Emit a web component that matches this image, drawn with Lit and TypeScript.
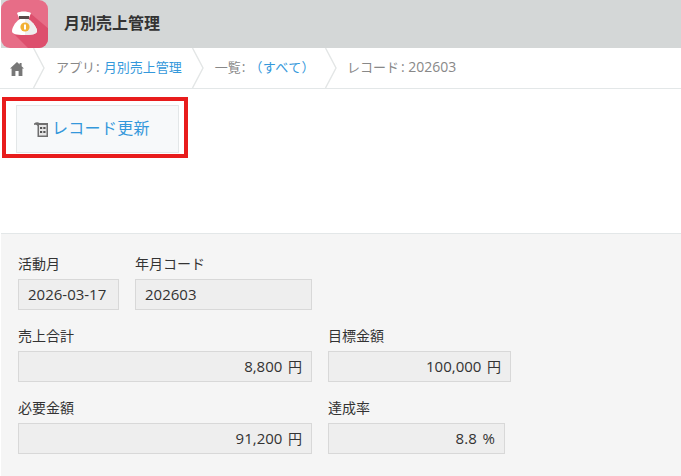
import { LitElement, html, css } from "lit";
import { customElement } from "lit/decorators.js";

const chevron = html`<svg class="chev" width="14" height="40" viewBox="0 0 14 40"><path d="M0.5 0 L11 20 L0.5 40" fill="none" stroke="#e3e6e6" stroke-width="1.4"/></svg>`;

@customElement("app-root")
export class AppRoot extends LitElement {
  static styles = css`
    :host { display: block; width: 681px; height: 476px; overflow: hidden; background: #fff; font-family: "Noto Sans CJK JP", sans-serif; color: #333; }
    .head { height: 48px; margin-left: 1px; background: #d4d7d7; display: flex; align-items: center; gap: 16px; }
    .logo { width: 47px; height: 48px; display: block; }
    .title { font-size: 16px; line-height: 20px; padding-bottom: 5px; font-weight: 700; color: #333; }
    .crumbs { height: 40px; border-bottom: 1px solid #e3e7e8; display: flex; align-items: center; font-size: 13px; line-height: 18px; color: #888; }
    .home { width: 34px; display: flex; justify-content: center; padding-top: 1px; }
    .chev { display: block; flex: none; margin-left: -1px; }
    .crumb { padding: 0 11px 3px 9px; white-space: nowrap; }
    .crumb.last { padding-left: 8px; }
    .crumb a { color: #3498db; text-decoration: none; }
    .wide { letter-spacing: .4px; }
    .num { font-family: "Open Sans", sans-serif; font-size: 14px; }
    .sep { margin: 0 4px 0 1px; }
    .lead { margin-left: 2px; }
    .toolbar { height: 144px; box-sizing: border-box; padding-top: 8px; padding-left: 2px; }
    .redbox { width: 186px; height: 61px; box-sizing: border-box; border: 4px solid #e81c1c; padding: 4px 0 0 10px; }
    .btn { width: 163px; height: 48px; box-sizing: border-box; border: 1px solid #e3e7e8; background: #f7f9fa; display: flex; align-items: center; padding-left: 16px; gap: 2px; color: #3498db; font-size: 16px; line-height: 20px; letter-spacing: .3px; }
    .btn span { padding-bottom: 4px; }
    .panel { margin-left: 1px; height: 243px; box-sizing: border-box; background: #f5f5f5; border-top: 1px solid #e3e7e8; padding: 20px 0 0 17px; display: flex; flex-direction: column; gap: 16px; }
    .row { display: flex; gap: 16px; }
    .label { font-size: 14px; line-height: 18px; height: 25px; color: #333; }
    .field { height: 31px; box-sizing: border-box; border: 1px solid #d8d8d8; background: #eeeeee; padding: 0 9px 2px; display: flex; align-items: center; font-size: 15px; font-family: "Open Sans", "Noto Sans CJK JP", sans-serif; color: #333; white-space: pre; word-spacing: 2px; }
    .right { justify-content: flex-end; }
    .unit { font-size: 14px; }
  `;

  private field(label: string, value: string, width: number, right = false, unit = "") {
    return html`<div>
      <div class="label">${label}</div>
      <div class="field ${right ? "right" : ""}" style="width:${width}px">${value}${unit ? html`<span class="unit"> ${unit}</span>` : ""}</div>
    </div>`;
  }

  render() {
    return html`
      <div class="head">
        <svg class="logo" viewBox="0 0 47 48">
          <defs><clipPath id="c"><rect width="47" height="48" rx="9"/></clipPath></defs>
          <g clip-path="url(#c)">
            <rect width="47" height="48" fill="#e76d87"/>
            <path d="M12 33 L29 13 L48 29 V48 H27 Z" fill="#dd4f6d"/>
            <path d="M16 13 C19 11 26 11 30 13 L28 18 H18 Z" fill="#fff"/>
            <rect x="18" y="16" width="10" height="3" fill="#5a4a4a"/>
            <path d="M19 19 H27 C32 22 36 28 36 31 C36 34 31 35 23 35 C15 35 11 34 11 31 C11 28 14 22 19 19 Z" fill="#fff"/>
            <path d="M24 19 H27 C32 22 36 28 36 31 C36 34 31 35 24 35 Z" fill="#eeeeee"/>
            <circle cx="24" cy="27" r="4.6" fill="#f2b135"/>
            <rect x="23" y="24.5" width="2" height="5" fill="#fff"/>
          </g>
        </svg>
        <div class="title">月別売上管理</div>
      </div>
      <div class="crumbs">
        <div class="home">
          <svg width="14" height="14" viewBox="0 0 14 14"><path d="M7 0 L9.6 2.4 V1 H11.6 V4.2 L14 6.6 H12.4 V14 H8.6 V9 H5.4 V14 H1.6 V6.6 H0 Z" fill="#777"/></svg>
        </div>
        ${chevron}
        <div class="crumb">アプリ<span class="num sep">:</span><a>月別売上管理</a></div>
        ${chevron}
        <div class="crumb">一覧<span class="num sep">:</span><a class="wide">（すべて）</a></div>
        ${chevron}
        <div class="crumb last">レコード<span class="num lead">: 202603</span></div>
      </div>
      <div class="toolbar">
        <div class="redbox">
          <div class="btn">
            <svg width="17" height="17" viewBox="0 0 17 17">
              <path d="M1 2.5 C3 1 5 1 6.5 2 H15 V16 H4.5 V5 C4 4 2.5 3.5 1 4 Z" fill="#6f6f6f"/>
              <rect x="6" y="4" width="7.5" height="10.5" fill="#e6e6e6"/>
              <path d="M7 6h2.2v2H7zM10.3 6h2.2v2h-2.2zM7 10h2.2v2H7zM10.3 10h2.2v2h-2.2z" fill="#555"/>
            </svg>
            <span>レコード更新</span>
          </div>
        </div>
      </div>
      <div class="panel">
        <div class="row">
          ${this.field("活動月", "2026-03-17", 101)}
          ${this.field("年月コード", "202603", 177)}
        </div>
        <div class="row">
          ${this.field("売上合計", "8,800", 294, true, "円")}
          ${this.field("目標金額", "100,000", 183, true, "円")}
        </div>
        <div class="row">
          ${this.field("必要金額", "91,200", 294, true, "円")}
          ${this.field("達成率", "8.8 %", 177, true)}
        </div>
      </div>
    `;
  }
}
